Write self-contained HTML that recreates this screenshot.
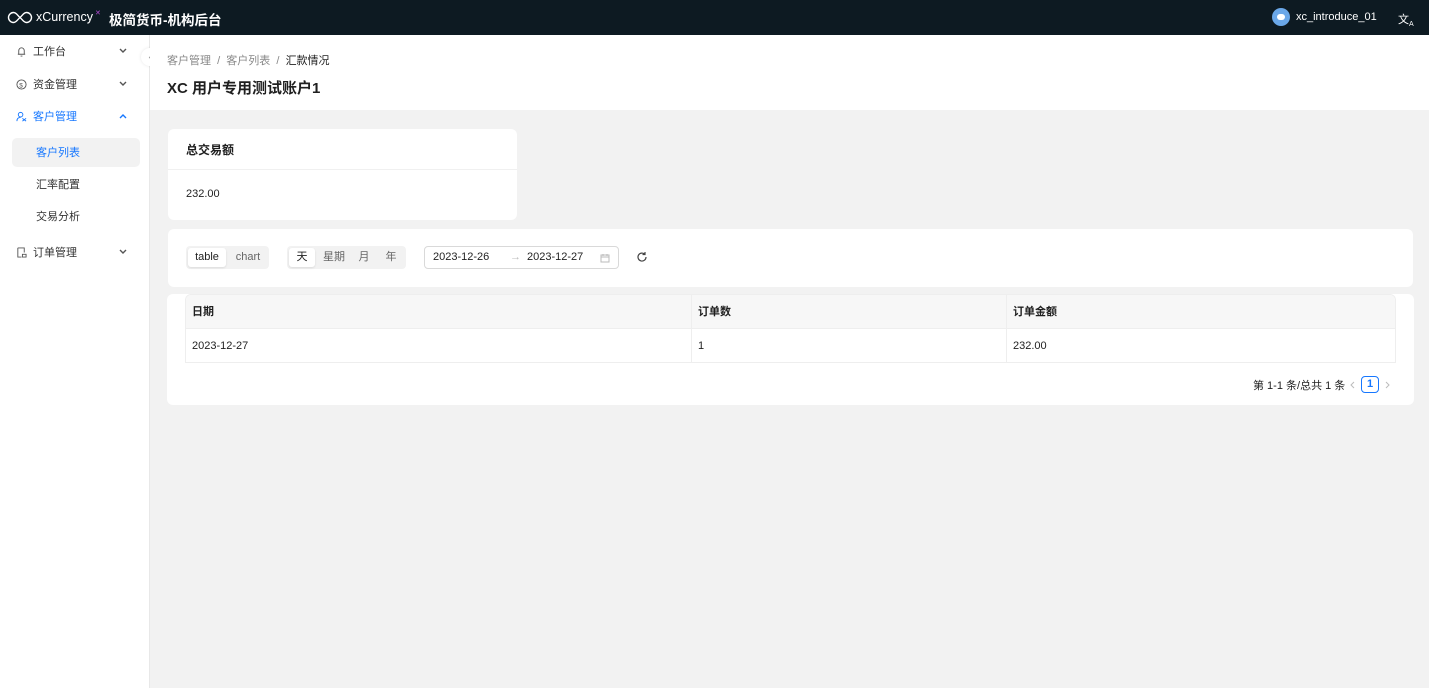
<!DOCTYPE html>
<html><head><meta charset="utf-8"><style>
*{box-sizing:border-box;margin:0;padding:0}
body{width:1429px;height:688px;overflow:hidden;font-family:"Liberation Sans","Noto Sans CJK SC",sans-serif;font-size:11px;color:#1f1f1f;background:#f2f2f2;position:relative}
.hd{position:absolute;left:0;top:0;width:1429px;height:35px;background:#0d1a22;color:#fff}
.sb{position:absolute;left:0;top:35px;width:150px;height:653px;background:#fff;border-right:1px solid #e8e8e8}
.mi{position:absolute;left:0;width:150px;height:20px;line-height:20px;font-size:11px;color:#333}
.mi .ic{position:absolute;left:16px;top:4px;width:11px;height:11px}
.mi .t{position:absolute;left:33px}
.mi .ar{position:absolute;left:119px;top:6px;width:8px;height:6px}
.top{position:absolute;left:150px;top:35px;width:1279px;height:75px;background:#fff}
.card{position:absolute;background:#fff;border-radius:6px}
.seg{position:absolute;background:#f2f2f2;border-radius:4px;height:23px}
.seg span{position:absolute;top:2px;height:19px;line-height:19px;text-align:center;color:#666}
.seg span.on{background:#fff;color:#222;border-radius:3px;box-shadow:0 1px 2px rgba(0,0,0,.1)}
</style></head><body>
<div class="hd">
<svg style="position:absolute;left:7px;top:11px" width="26" height="13" viewBox="0 0 26 13"><path d="M6.5 1.5a5 5 0 1 0 0 10c3 0 4-3 6.5-5s3.5-5 6.5-5a5 5 0 1 1 0 10c-3 0-4-3-6.5-5S9.5 1.5 6.5 1.5z" fill="none" stroke="#fff" stroke-width="1.4"/></svg>
<span style="position:absolute;left:36px;top:10px;font-size:12.5px">xCurrency</span>
<span style="position:absolute;left:95px;top:9px;font-size:7px;color:#b54bd6">✕</span>
<span style="position:absolute;left:109px;top:9px;font-size:13.5px;font-weight:bold">极简货币-机构后台</span>
<div style="position:absolute;left:1272px;top:8px;width:18px;height:18px;border-radius:50%;background:#6aa7e8"><div style="position:absolute;left:5px;top:6px;width:8px;height:6px;border-radius:3px;background:#fff"></div></div>
<span style="position:absolute;left:1296px;top:11px;font-size:11px">xc_introduce_01</span>
<span style="position:absolute;left:1398px;top:11px;font-size:11px">文<sub style="font-size:7px">A</sub></span>
</div>
<div class="sb">
<div class="mi" style="top:7px"><svg class="ic" viewBox="0 0 12 12"><path d="M3 9V5a3 3 0 0 1 6 0v4zM2 9h8M5 11h2" fill="none" stroke="#555"/></svg><span class="t">工作台</span><svg class="ar" viewBox="0 0 8 6"><path d="M1 1l3 3 3-3" fill="none" stroke="#555" stroke-width="1.4"/></svg></div>
<div class="mi" style="top:40px"><svg class="ic" viewBox="0 0 12 12"><circle cx="6" cy="6" r="5" fill="none" stroke="#555"/><text x="3.5" y="9" font-size="7" fill="#555">$</text></svg><span class="t">资金管理</span><svg class="ar" viewBox="0 0 8 6"><path d="M1 1l3 3 3-3" fill="none" stroke="#555" stroke-width="1.4"/></svg></div>
<div class="mi" style="top:72px;color:#1677ff"><svg class="ic" viewBox="0 0 12 12"><circle cx="5" cy="4" r="2.5" fill="none" stroke="#1677ff"/><path d="M1 11c0-3 2-4 4-4M7 8l4 3M11 8l-4 3" fill="none" stroke="#1677ff"/></svg><span class="t">客户管理</span><svg class="ar" viewBox="0 0 8 6"><path d="M1 5l3-3 3 3" fill="none" stroke="#1677ff" stroke-width="1.4"/></svg></div>
<div style="position:absolute;left:12px;top:103px;width:128px;height:29px;background:#f2f2f2;border-radius:5px"></div>
<div class="mi" style="top:108px;color:#1677ff"><span class="t" style="left:36px">客户列表</span></div>
<div class="mi" style="top:140px"><span class="t" style="left:36px">汇率配置</span></div>
<div class="mi" style="top:172px"><span class="t" style="left:36px">交易分析</span></div>
<div class="mi" style="top:208px"><svg class="ic" viewBox="0 0 12 12"><path d="M2 1h7v5M2 1v10h4M7 8h4v3H7z" fill="none" stroke="#555"/></svg><span class="t">订单管理</span><svg class="ar" viewBox="0 0 8 6"><path d="M1 1l3 3 3-3" fill="none" stroke="#555" stroke-width="1.4"/></svg></div>
</div>
<div style="position:absolute;left:141px;top:48px;width:18px;height:18px;border-radius:50%;background:#fff;box-shadow:0 0 3px rgba(0,0,0,.1)"><svg style="position:absolute;left:7px;top:6px" width="5" height="7" viewBox="0 0 5 7"><path d="M4 1L1.5 3.5 4 6" fill="none" stroke="#999"/></svg></div>
<div class="top">
<div style="position:absolute;left:17px;top:17px;color:#888">客户管理 &nbsp;/&nbsp; 客户列表 &nbsp;/&nbsp; <span style="color:#222">汇款情况</span></div>
<div style="position:absolute;left:17px;top:42px;font-size:15px;font-weight:bold">XC 用户专用测试账户1</div>
</div>
<div class="card" style="left:168px;top:129px;width:349px;height:91px">
<div style="position:absolute;left:18px;top:12px;font-size:12px;font-weight:bold">总交易额</div>
<div style="position:absolute;left:0;top:40px;width:349px;border-top:1px solid #f0f0f0"></div>
<div style="position:absolute;left:18px;top:59px">232.00</div>
</div>
<div class="card" style="left:168px;top:229px;width:1245px;height:58px">
<div class="seg" style="left:18px;top:17px;width:83px"><span class="on" style="left:2px;width:38px">table</span><span style="left:42px;width:40px">chart</span></div>
<div class="seg" style="left:119px;top:17px;width:119px"><span class="on" style="left:2px;width:26px">天</span><span style="left:30px;width:34px">星期</span><span style="left:64px;width:26px">月</span><span style="left:90px;width:28px">年</span></div>
<div style="position:absolute;left:256px;top:17px;width:195px;height:23px;border:1px solid #d9d9d9;border-radius:4px;line-height:21px">
<span style="position:absolute;left:8px">2023-12-26</span><span style="position:absolute;left:85px;color:#bbb">→</span><span style="position:absolute;left:102px">2023-12-27</span>
<svg style="position:absolute;left:175px;top:6px" width="10" height="10" viewBox="0 0 10 10"><path d="M1 2h8v7H1zM1 4h8M3 1v2M7 1v2" fill="none" stroke="#bbb"/></svg></div>
<svg style="position:absolute;left:468px;top:22px" width="12" height="12" viewBox="0 0 12 12"><path d="M10 6a4 4 0 1 1-1.2-2.8M9 1v2.5H6.5" fill="none" stroke="#444" stroke-width="1.2"/></svg>
</div>
<div class="card" style="left:167px;top:294px;width:1247px;height:111px">
<div style="position:absolute;left:18px;top:0;width:1211px;height:69px;border:1px solid #eee;border-radius:6px 6px 0 0;overflow:hidden">
<div style="height:34px;background:#f7f7f7;border-bottom:1px solid #eee;position:relative;font-weight:bold;line-height:34px">
<span style="position:absolute;left:6px">日期</span><span style="position:absolute;left:505px;top:0;height:34px;border-left:1px solid #eee;padding-left:6px">订单数</span><span style="position:absolute;left:820px;top:0;height:34px;border-left:1px solid #eee;padding-left:6px">订单金额</span></div>
<div style="height:34px;position:relative;line-height:34px">
<span style="position:absolute;left:6px">2023-12-27</span><span style="position:absolute;left:505px;top:0;height:34px;border-left:1px solid #eee;padding-left:6px">1</span><span style="position:absolute;left:820px;top:0;height:34px;border-left:1px solid #eee;padding-left:6px">232.00</span></div>
</div>
<span style="position:absolute;left:1086px;top:83px">第 1-1 条/总共 1 条</span>
<svg style="position:absolute;left:1182px;top:87px" width="6" height="8" viewBox="0 0 6 8"><path d="M5 1L2 4l3 3" fill="none" stroke="#bbb"/></svg>
<div style="position:absolute;left:1194px;top:82px;width:18px;height:17px;border:1px solid #1677ff;border-radius:4px;color:#1677ff;text-align:center;line-height:15px;font-weight:bold">1</div>
<svg style="position:absolute;left:1218px;top:87px" width="6" height="8" viewBox="0 0 6 8"><path d="M1 1l3 3-3 3" fill="none" stroke="#bbb"/></svg>
</div>
</body></html>
